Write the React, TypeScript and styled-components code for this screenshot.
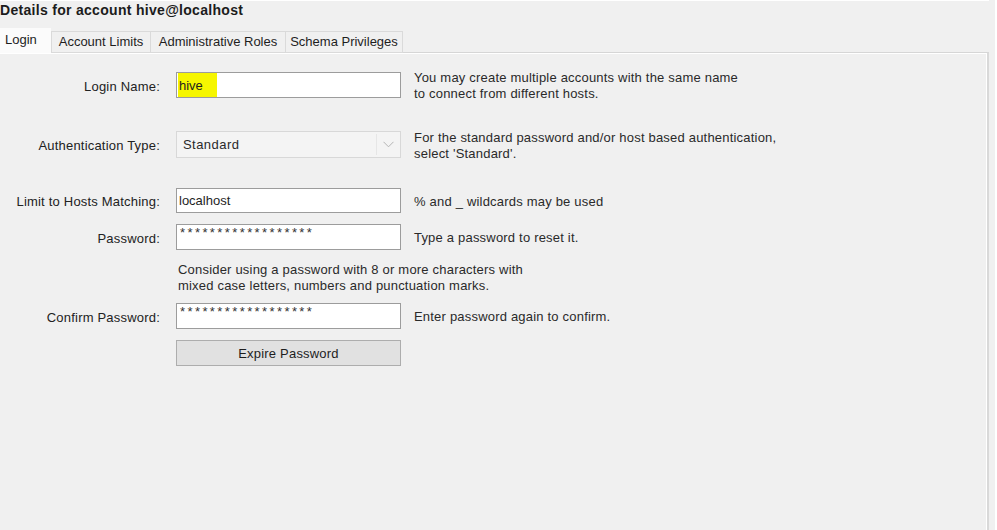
import React from "react";
import styled, { createGlobalStyle } from "styled-components";

const Global = createGlobalStyle`
  html, body { margin: 0; padding: 0; background: #f0f0f0; }
  body { font-family: "Liberation Sans", Arial, sans-serif; font-size: 13px; color: #222; letter-spacing: 0.2px; }
  #root { width: 997px; height: 530px; overflow: hidden; }
`;

const Page = styled.div`
  width: 995px;
  height: 530px;
  display: flex;
  flex-direction: column;
  background: #f0f0f0;
  border-right: 2px solid #ffffff;
  box-sizing: content-box;
`;

const TopLine = styled.div`
  width: 989px;
  height: 1px;
  background: #ffffff;
`;

const Title = styled.div`
  height: 21px;
  line-height: 19px;
  font-weight: bold;
  font-size: 14px;
  color: #1c1c1c;
  letter-spacing: 0.3px;
`;

const TabBar = styled.div`
  display: flex;
  align-items: flex-end;
  height: 31px;
  position: relative;
  z-index: 1;
  margin-bottom: -1px;
`;

const Tab = styled.div<{ $w: number; $active?: boolean }>`
  width: ${(p) => p.$w}px;
  box-sizing: border-box;
  height: ${(p) => (p.$active ? 25 : 22)}px;
  line-height: ${(p) => (p.$active ? 22 : 20)}px;
  text-align: ${(p) => (p.$active ? "left" : "center")};
  padding-left: ${(p) => (p.$active ? 4 : 0)}px;
  color: #1e1e1e;
  letter-spacing: 0;
  background: ${(p) => (p.$active ? "#fbfbfb" : "#f0f0f0")};
  border: 1px solid ${(p) => (p.$active ? "#fbfbfb" : "#dadada")};
  border-bottom: ${(p) => (p.$active ? "none" : "1px solid #dadada")};
  margin-left: ${(p) => (p.$active ? 0 : -1)}px;
  white-space: nowrap;
  &:nth-child(2) { margin-left: 0; }
`;

const Panel = styled.div`
  width: 989px;
  flex: 1;
  box-sizing: border-box;
  border-top: 1px solid #d6d6d6;
  border-right: 2px solid #d9d9d9;
  box-shadow: inset 0 1px 0 #ffffff, inset -1px 0 0 #ffffff;
  padding-top: 19px;
  display: flex;
  flex-direction: column;
`;

const Row = styled.div<{ $top: number; $h: number }>`
  display: flex;
  align-items: center;
  margin-top: ${(p) => p.$top}px;
  height: ${(p) => p.$h}px;
`;

const Label = styled.div`
  width: 160px;
  text-align: right;
  color: #222;
  white-space: nowrap;
  padding-top: 2px;
`;

const FieldBox = styled.div<{ $h: number }>`
  margin-left: 16px;
  width: 225px;
  height: ${(p) => p.$h}px;
  box-sizing: border-box;
  background: #ffffff;
  border: 1px solid #9c9c9c;
  display: flex;
  align-items: center;
  padding-left: 1px;
  color: #1e1e1e;
  white-space: nowrap;
  overflow: hidden;
  letter-spacing: 0;
`;

const FieldText = styled.span`
  padding-left: 1px;
`;

const Highlight = styled.span`
  background: #f6f600;
  align-self: stretch;
  display: flex;
  align-items: center;
  width: 39px;
  padding-left: 1px;
  box-sizing: border-box;
`;

const Stars = styled.span`
  align-self: flex-start;
  padding-left: 2px;
  margin-top: 1px;
  font-size: 13px;
  letter-spacing: 2.4px;
  line-height: 14px;
  color: #333;
`;

const SelectBox = styled.div`
  margin-left: 16px;
  width: 225px;
  height: 27px;
  box-sizing: border-box;
  background: #f4f4f4;
  border: 1px solid #d8d8d8;
  display: flex;
  align-items: center;
  color: #2a2a2a;
`;

const SelectValue = styled.span`
  flex: 1;
  padding-left: 6px;
  letter-spacing: 0.45px;
`;

const SelectArrow = styled.div`
  width: 23px;
  align-self: stretch;
  border-left: 1px solid #e6e6e6;
  display: flex;
  align-items: center;
  justify-content: center;
  margin: 2px 0;
`;

const Help = styled.div`
  margin-left: 13px;
  padding-top: 2px;
  line-height: 16px;
  color: #2a2a2a;
  white-space: nowrap;
`;

const Note = styled.div`
  margin-left: 178px;
  padding-top: 1px;
  line-height: 16px;
  color: #2a2a2a;
  white-space: nowrap;
`;

const Button = styled.div`
  margin-left: 176px;
  width: 225px;
  height: 26px;
  box-sizing: border-box;
  background: #e1e1e1;
  border: 1px solid #adadad;
  display: flex;
  align-items: center;
  justify-content: center;
  color: #1e1e1e;
`;

export default function App() {
  return (
    <>
      <Global />
      <Page>
        <TopLine />
        <Title>Details for account hive@localhost</Title>
        <TabBar>
          <Tab $w={51} $active>Login</Tab>
          <Tab $w={100}>Account Limits</Tab>
          <Tab $w={136}>Administrative Roles</Tab>
          <Tab $w={118}>Schema Privileges</Tab>
        </TabBar>
        <Panel>
          <Row $top={0} $h={26}>
            <Label>Login Name:</Label>
            <FieldBox $h={26}>
              <Highlight>hive</Highlight>
            </FieldBox>
            <Help>
              You may create multiple accounts with the same name
              <br />
              to connect from different hosts.
            </Help>
          </Row>
          <Row $top={33} $h={27}>
            <Label>Authentication Type:</Label>
            <SelectBox>
              <SelectValue>Standard</SelectValue>
              <SelectArrow>
                <svg width="11" height="7" viewBox="0 0 11 7">
                  <path d="M0.5 0.8 L5.5 5.8 L10.5 0.8" fill="none" stroke="#b4b4b4" strokeWidth="1" />
                </svg>
              </SelectArrow>
            </SelectBox>
            <Help>
              For the standard password and/or host based authentication,
              <br />
              select 'Standard'.
            </Help>
          </Row>
          <Row $top={30} $h={25}>
            <Label>Limit to Hosts Matching:</Label>
            <FieldBox $h={25}>
              <FieldText>localhost</FieldText>
            </FieldBox>
            <Help>% and _ wildcards may be used</Help>
          </Row>
          <Row $top={11} $h={26}>
            <Label>Password:</Label>
            <FieldBox $h={26}>
              <Stars>******************</Stars>
            </FieldBox>
            <Help>Type a password to reset it.</Help>
          </Row>
          <Row $top={11} $h={32}>
            <Note>
              Consider using a password with 8 or more characters with
              <br />
              mixed case letters, numbers and punctuation marks.
            </Note>
          </Row>
          <Row $top={10} $h={26}>
            <Label>Confirm Password:</Label>
            <FieldBox $h={26}>
              <Stars>******************</Stars>
            </FieldBox>
            <Help>Enter password again to confirm.</Help>
          </Row>
          <Row $top={11} $h={26}>
            <Button>Expire Password</Button>
          </Row>
        </Panel>
      </Page>
    </>
  );
}
